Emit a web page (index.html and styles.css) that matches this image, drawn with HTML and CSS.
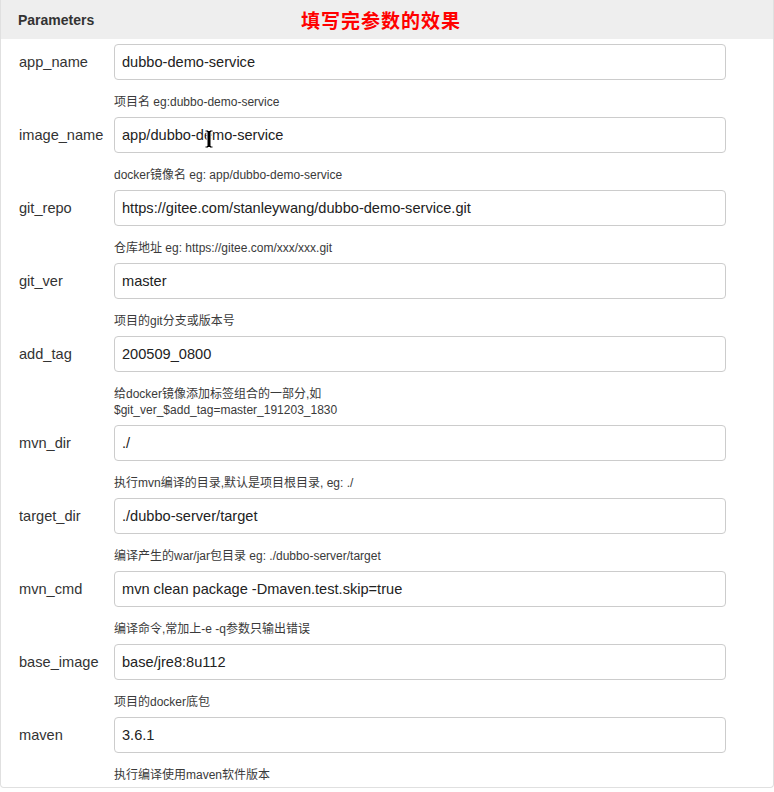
FILE: index.html
```html
<!DOCTYPE html>
<html lang="en">
<head>
  <meta charset="UTF-8" />
  <title>Parameters</title>
  <link rel="stylesheet" href="styles.css">
</head>
<body>
  <div class="panel">
    <div class="panel-heading">
      <span class="panel-title">Parameters</span>
      <span class="note">填写完参数的效果</span>
    </div>

    <div class="panel-body">
      <div class="param">
        <label>app_name</label>
        <div class="field">
          <input type="text" value="dubbo-demo-service">
          <div class="help">项目名 eg:dubbo-demo-service</div>
        </div>
      </div>

      <div class="param">
        <label>image_name</label>
        <div class="field">
          <input type="text" value="app/dubbo-demo-service">
          <!-- mouse cursor from the screenshot -->
          <svg class="ibeam" width="10" height="20" viewBox="0 0 10 20">
            <path d="M1 1h3l1 1 1-1h3v2H7v14h2v2H6l-1-1-1 1H1v-2h2V3H1z" fill="#000" stroke="#fff" stroke-width="1"/>
          </svg>
          <div class="help">docker镜像名 eg: app/dubbo-demo-service</div>
        </div>
      </div>

      <div class="param">
        <label>git_repo</label>
        <div class="field">
          <input type="text" value="https://gitee.com/stanleywang/dubbo-demo-service.git">
          <div class="help">仓库地址 eg: https://gitee.com/xxx/xxx.git</div>
        </div>
      </div>

      <div class="param">
        <label>git_ver</label>
        <div class="field">
          <input type="text" value="master">
          <div class="help">项目的git分支或版本号</div>
        </div>
      </div>

      <div class="param">
        <label>add_tag</label>
        <div class="field">
          <input type="text" value="200509_0800">
          <div class="help">给docker镜像添加标签组合的一部分,如<br>$git_ver_$add_tag=master_191203_1830</div>
        </div>
      </div>

      <div class="param">
        <label>mvn_dir</label>
        <div class="field">
          <input type="text" value="./">
          <div class="help">执行mvn编译的目录,默认是项目根目录, eg: ./</div>
        </div>
      </div>

      <div class="param">
        <label>target_dir</label>
        <div class="field">
          <input type="text" value="./dubbo-server/target">
          <div class="help">编译产生的war/jar包目录 eg: ./dubbo-server/target</div>
        </div>
      </div>

      <div class="param">
        <label>mvn_cmd</label>
        <div class="field">
          <input type="text" value="mvn clean package -Dmaven.test.skip=true">
          <div class="help">编译命令,常加上-e -q参数只输出错误</div>
        </div>
      </div>

      <div class="param">
        <label>base_image</label>
        <div class="field">
          <input type="text" value="base/jre8:8u112">
          <div class="help">项目的docker底包</div>
        </div>
      </div>

      <div class="param last">
        <label>maven</label>
        <div class="field">
          <input type="text" value="3.6.1">
          <div class="help">执行编译使用maven软件版本</div>
        </div>
      </div>
    </div>
  </div>
</body>
</html>
```

FILE: styles.css
```css
html, body {
  margin: 0;
  padding: 0;
  background: #fff;
  color: #333;
  font-family: "Liberation Sans", "Noto Sans CJK SC", sans-serif;
}

.panel {
  width: 772px;
  border: 1px solid #e0e0e0;
  border-top: none;
  border-radius: 0 0 4px 4px;
  background: #fff;
}

.panel-heading {
  display: flex;
  align-items: center;
  height: 39px;
  padding-left: 17px;
  background: #eeeeee;
}

.panel-title {
  width: 283px;
  font-size: 14px;
  font-weight: bold;
  color: #333;
}

.note {
  font-size: 19px;
  font-weight: bold;
  color: #ff0000;
  font-family: "Noto Sans CJK SC", sans-serif;
  letter-spacing: 1px;
}

.panel-body {
  padding-top: 5px;
}

.param {
  display: grid;
  grid-template-columns: 113px 612px;
}

.param label {
  height: 36px;
  line-height: 36px;
  padding-left: 18px;
  font-size: 14.6px;
  color: #333;
}

.field {
  position: relative;
}

.field input {
  display: block;
  box-sizing: border-box;
  width: 612px;
  height: 36px;
  margin: 0;
  padding: 0 8px 0 7px;
  border: 1px solid #ccc;
  border-radius: 4px;
  font-family: "Liberation Sans", "Noto Sans CJK SC", sans-serif;
  font-size: 14.6px;
  color: #222;
  background: #fff;
  outline: none;
}

.help {
  padding: 14px 0 7px;
  font-size: 12px;
  line-height: 16px;
  color: #3a3a3a;
}

.param.last .help {
  padding-bottom: 4px;
}

.ibeam {
  position: absolute;
  left: 90px;
  top: 12px;
}
```
